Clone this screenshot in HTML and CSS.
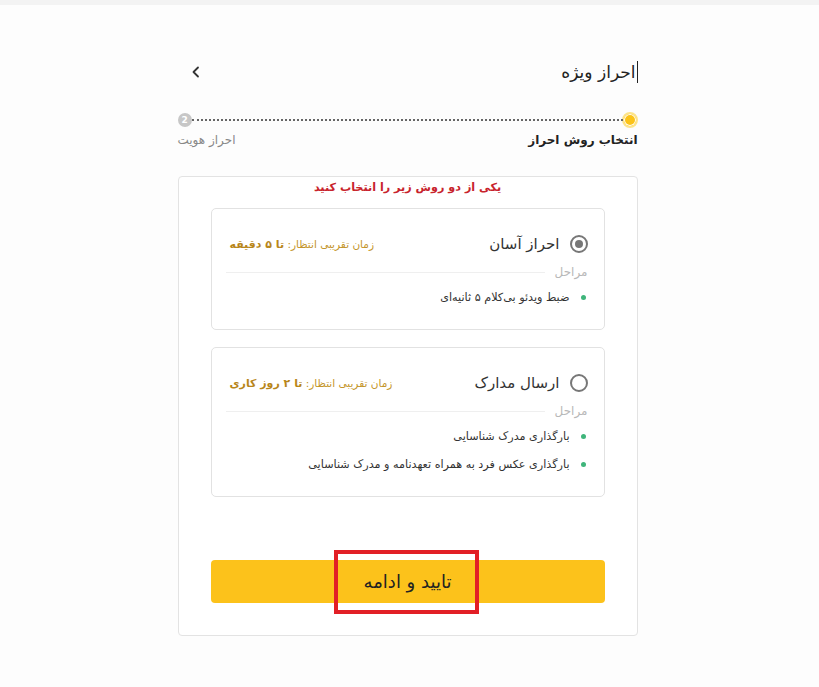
FILE: index.html
```html
<!DOCTYPE html>
<html lang="fa" dir="rtl">
<head>
  <meta charset="UTF-8" />
  <title>احراز ویژه</title>
  <link rel="stylesheet" href="styles.css">
</head>
<body>
  <div class="topbar"></div>

  <main class="page">
    <header class="head">
      <h1><span class="caret"></span>احراز ویژه</h1>
      <button class="back" aria-label="back">
        <svg width="14" height="14" viewBox="0 0 14 14"><path d="M9 2.5 4.5 7 9 11.5" fill="none" stroke="#333" stroke-width="1.8" stroke-linecap="round" stroke-linejoin="round"/></svg>
      </button>
    </header>

    <div class="stepper">
      <div class="track">
        <span class="dot active"></span>
        <span class="line"></span>
        <span class="dot num">2</span>
      </div>
      <div class="labels">
        <span class="cur">انتخاب روش احراز</span>
        <span class="next">احراز هویت</span>
      </div>
    </div>

    <section class="card">
      <h2 class="hint">یکی از دو روش زیر را انتخاب کنید</h2>

      <div class="option">
        <div class="opt-head">
          <label class="opt-title"><span class="radio checked"></span>احراز آسان</label>
          <span class="wait">زمان تقریبی انتظار: <b>تا ۵ دقیقه</b></span>
        </div>
        <div class="steps-title"><span>مراحل</span><i></i></div>
        <ul class="steps">
          <li>ضبط ویدئو بی‌کلام ۵ ثانیه‌ای</li>
        </ul>
      </div>

      <div class="option">
        <div class="opt-head">
          <label class="opt-title"><span class="radio"></span>ارسال مدارک</label>
          <span class="wait">زمان تقریبی انتظار: <b>تا ۲ روز کاری</b></span>
        </div>
        <div class="steps-title"><span>مراحل</span><i></i></div>
        <ul class="steps">
          <li>بارگذاری مدرک شناسایی</li>
          <li>بارگذاری عکس فرد به همراه تعهدنامه و مدرک شناسایی</li>
        </ul>
      </div>

      <div class="submit-wrap">
        <button class="submit">تایید و ادامه</button>
        <span class="mark"></span>
      </div>
    </section>
  </main>
</body>
</html>
```

FILE: styles.css
```css
* {
  margin: 0;
  padding: 0;
  box-sizing: border-box;
  font-family: "DejaVu Sans", "Noto Sans", sans-serif;
}

body {
  background: #fdfdfd;
  color: #333;
}

.topbar {
  height: 5px;
  background: #f3f3f3;
}

.page {
  width: 460px;
  margin-right: calc(50% - 228px);
  padding-top: 50px;
  padding-bottom: 40px;
}

.head {
  display: flex;
  align-items: center;
  justify-content: space-between;
  height: 34px;
  padding-left: 8px;
}

.head h1 {
  font-size: 17px;
  font-weight: normal;
  color: #222;
  display: flex;
  align-items: center;
}

.caret {
  display: inline-block;
  width: 1px;
  height: 22px;
  background: #222;
  margin-left: 1px;
}

.back {
  background: none;
  border: none;
  width: 20px;
  height: 20px;
  display: flex;
  align-items: center;
  justify-content: center;
}

.stepper {
  margin-top: 23px;
}

.track {
  display: flex;
  align-items: center;
  height: 16px;
}

.dot {
  width: 16px;
  height: 16px;
  border-radius: 50%;
  flex-shrink: 0;
}

.dot.active {
  background: #fbc319;
  border: 2px solid #fde48a;
  box-shadow: inset 0 0 0 1px #fff;
  margin-left: -1px;
}

.dot.num {
  width: 14px;
  height: 14px;
  background: #c7c7c7;
  color: #fff;
  font-size: 9px;
  font-weight: bold;
  display: flex;
  align-items: center;
  justify-content: center;
}

.line {
  flex: 1;
  border-top: 2px dotted #666;
}

.labels {
  display: flex;
  justify-content: space-between;
  margin-top: 5px;
  font-size: 12px;
}

.labels .cur {
  font-weight: bold;
  color: #222;
}

.labels .next {
  color: #888;
}

.card {
  margin-top: 29px;
  border: 1px solid #e3e3e3;
  border-radius: 4px;
  background: #fff;
  padding: 0 32px 32px;
}

.hint {
  text-align: center;
  color: #c8232c;
  font-size: 11.2px;
  font-weight: bold;
  height: 26px;
  line-height: 21px;
}

.option {
  border: 1px solid #e2e2e2;
  border-radius: 5px;
  padding: 24px 16px 18px 18px;
  margin-top: 5px;
}

.option + .option {
  margin-top: 17px;
}

.opt-head {
  display: flex;
  align-items: center;
  justify-content: space-between;
  height: 22px;
}

.opt-title {
  display: flex;
  align-items: center;
  gap: 10px;
  font-size: 15px;
  color: #333;
}

.radio {
  width: 18px;
  height: 18px;
  border-radius: 50%;
  border: 2px solid #777;
  display: flex;
  align-items: center;
  justify-content: center;
}

.radio.checked::after {
  content: "";
  width: 8px;
  height: 8px;
  border-radius: 50%;
  background: #777;
}

.wait {
  font-size: 10.5px;
  color: #c4952a;
}

.wait b {
  color: #b8861a;
  font-size: 11px;
}

.steps-title {
  display: flex;
  align-items: center;
  gap: 10px;
  margin-top: 10px;
  font-size: 12px;
  color: #b8b8b8;
}

.steps-title i {
  flex: 1;
  border-top: 1px solid #efefef;
  margin-left: -4px;
}

.steps {
  list-style: none;
  margin-top: 4px;
}

.steps li {
  display: flex;
  align-items: center;
  gap: 11px;
  font-size: 11.2px;
  color: #333;
  height: 28px;
  padding-right: 2px;
}

.steps li::before {
  content: "";
  width: 5px;
  height: 5px;
  border-radius: 50%;
  background: #3fb57b;
  flex-shrink: 0;
}

.submit-wrap {
  position: relative;
  margin-top: 63px;
}

.submit {
  width: 100%;
  height: 43px;
  border: none;
  border-radius: 4px;
  background: #fcc21b;
  color: #222;
  font-size: 18px;
  cursor: pointer;
}

.mark {
  position: absolute;
  left: 123px;
  top: -10px;
  width: 145px;
  height: 64px;
  border: 4px solid #e21f26;
  pointer-events: none;
}
```
